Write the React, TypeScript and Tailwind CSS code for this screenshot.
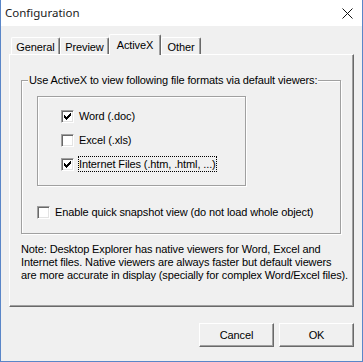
import React from "react"

const sans = "font-['Liberation_Sans',Arial,sans-serif]"

function CheckBox({ checked }: { checked?: boolean }) {
    return (
        <span className="flex h-[13px] w-[13px] shrink-0 items-center justify-center border border-t-[#a0a0a0] border-l-[#a0a0a0] border-r-white border-b-white bg-white shadow-[inset_1px_1px_0_#696969,inset_-1px_-1px_0_#e3e3e3]">
            {checked && (
                <svg width="7" height="7" viewBox="0 0 7 7" shapeRendering="crispEdges">
                    <path d="M6 0h1v3h-1v1h-1v1h-1v1h-1v1h-1v-1h-1v-1h-1v-3h1v1h1v1h1v-1h1v-1h1z" fill="#000" />
                </svg>
            )}
        </span>
    )
}

function Option({ label, checked, focused }: { label: string; checked?: boolean; focused?: boolean }) {
    return (
        <div className="flex items-center gap-[4px]">
            <CheckBox checked={checked} />
            <span
                className={`border whitespace-nowrap leading-[14px] ${
                    focused ? "border-dotted border-black" : "border-transparent"
                }`}
            >
                {label}
            </span>
        </div>
    )
}

function Tab({ label, active, width }: { label: string; active?: boolean; width: string }) {
    if (active) {
        return (
            <div
                className={`relative z-10 -mb-[1px] flex h-[21px] ${width} items-start justify-center rounded-t-[2px] border-t border-l border-r border-t-white border-l-white border-r-[#696969] bg-[#f0f0f0] pt-[2px] shadow-[inset_-1px_0_0_#a0a0a0]`}
            >
                {label}
            </div>
        )
    }
    return (
        <div
            className={`flex h-[17px] ${width} items-start justify-center rounded-t-[2px] border-t border-l border-r border-t-white border-l-white border-r-[#696969] bg-[#f0f0f0] pt-[1px] shadow-[inset_-1px_0_0_#a0a0a0]`}
        >
            {label}
        </div>
    )
}

function Button({ children }: { children: React.ReactNode }) {
    return (
        <button className="flex h-[24px] w-[75px] items-center justify-center border border-t-white border-l-white border-r-[#696969] border-b-[#696969] bg-[#f0f0f0] shadow-[inset_-1px_-1px_0_#a0a0a0]">
            {children}
        </button>
    )
}

export default function App() {
    return (
        <div className={`flex h-[362px] w-[363px] flex-col border-x border-b border-[#5a86c8] bg-[#f0f0f0] text-[11px] tracking-[-0.12px] text-black ${sans}`}>
            {/* Title bar */}
            <div className="flex h-[26px] shrink-0 items-center justify-between bg-white pl-[4px] pr-[9px]">
                <span className="font-['Noto_Sans',sans-serif] text-[11.5px] tracking-normal text-[#1a1a1a]">Configuration</span>
                <svg width="11" height="11" viewBox="0 0 11 11" className="mt-[1px]">
                    <path d="M0.5 0.5L10.5 10.5M10.5 0.5L0.5 10.5" stroke="#111" strokeWidth="1" />
                </svg>
            </div>

            <div className="flex flex-col pl-[8px] pt-[8px]">
                {/* Tabs */}
                <div className="ml-[2px] flex h-[20px] items-end">
                    <Tab label="General" width="w-[49px]" />
                    <Tab label="Preview" width="w-[49px]" />
                    <Tab label="ActiveX" width="w-[52px]" active />
                    <Tab label="Other" width="w-[40px]" />
                </div>

                {/* Tab panel */}
                <div className="flex h-[253px] w-[345px] flex-col border border-t-white border-l-white border-r-[#696969] border-b-[#696969] pl-[11px] pt-[25px] shadow-[inset_-1px_-1px_0_#a0a0a0]">
                    <div className="relative flex h-[154px] w-[320px] flex-col border border-[#a0a0a0] pl-[15px] pt-[15px] shadow-[inset_1px_1px_0_#fff,1px_1px_0_#fff]">
                        <span className="absolute -top-[7px] left-[6px] bg-[#f0f0f0] px-[1px] leading-[13px] whitespace-nowrap">
                            Use ActiveX to view following file formats via default viewers:
                        </span>

                        <div className="flex h-[90px] w-[209px] flex-col gap-[11px] border border-[#a0a0a0] pl-[23px] pt-[11px] shadow-[inset_1px_1px_0_#fff,1px_1px_0_#fff]">
                            <div className="h-[13px]">
                                <Option label="Word (.doc)" checked />
                            </div>
                            <div className="h-[13px]">
                                <Option label="Excel (.xls)" />
                            </div>
                            <div className="h-[13px]">
                                <Option label="Internet Files (.htm,  .html,  ...)" checked focused />
                            </div>
                        </div>

                        <div className="mt-[18px] h-[13px]">
                            <Option label="Enable quick snapshot view (do not load whole object)" />
                        </div>
                    </div>

                    <p className="mt-[9px] whitespace-nowrap leading-[13px]">
                        Note: Desktop Explorer has native viewers for Word, Excel and
                        <br />
                        Internet files. Native viewers are always faster but default viewers
                        <br />
                        are more accurate in display (specially for complex Word/Excel files).
                    </p>
                </div>

                {/* Buttons */}
                <div className="mt-[16px] flex w-[345px] justify-end gap-[5px]">
                    <Button>Cancel</Button>
                    <Button>OK</Button>
                </div>
            </div>
        </div>
    )
}
